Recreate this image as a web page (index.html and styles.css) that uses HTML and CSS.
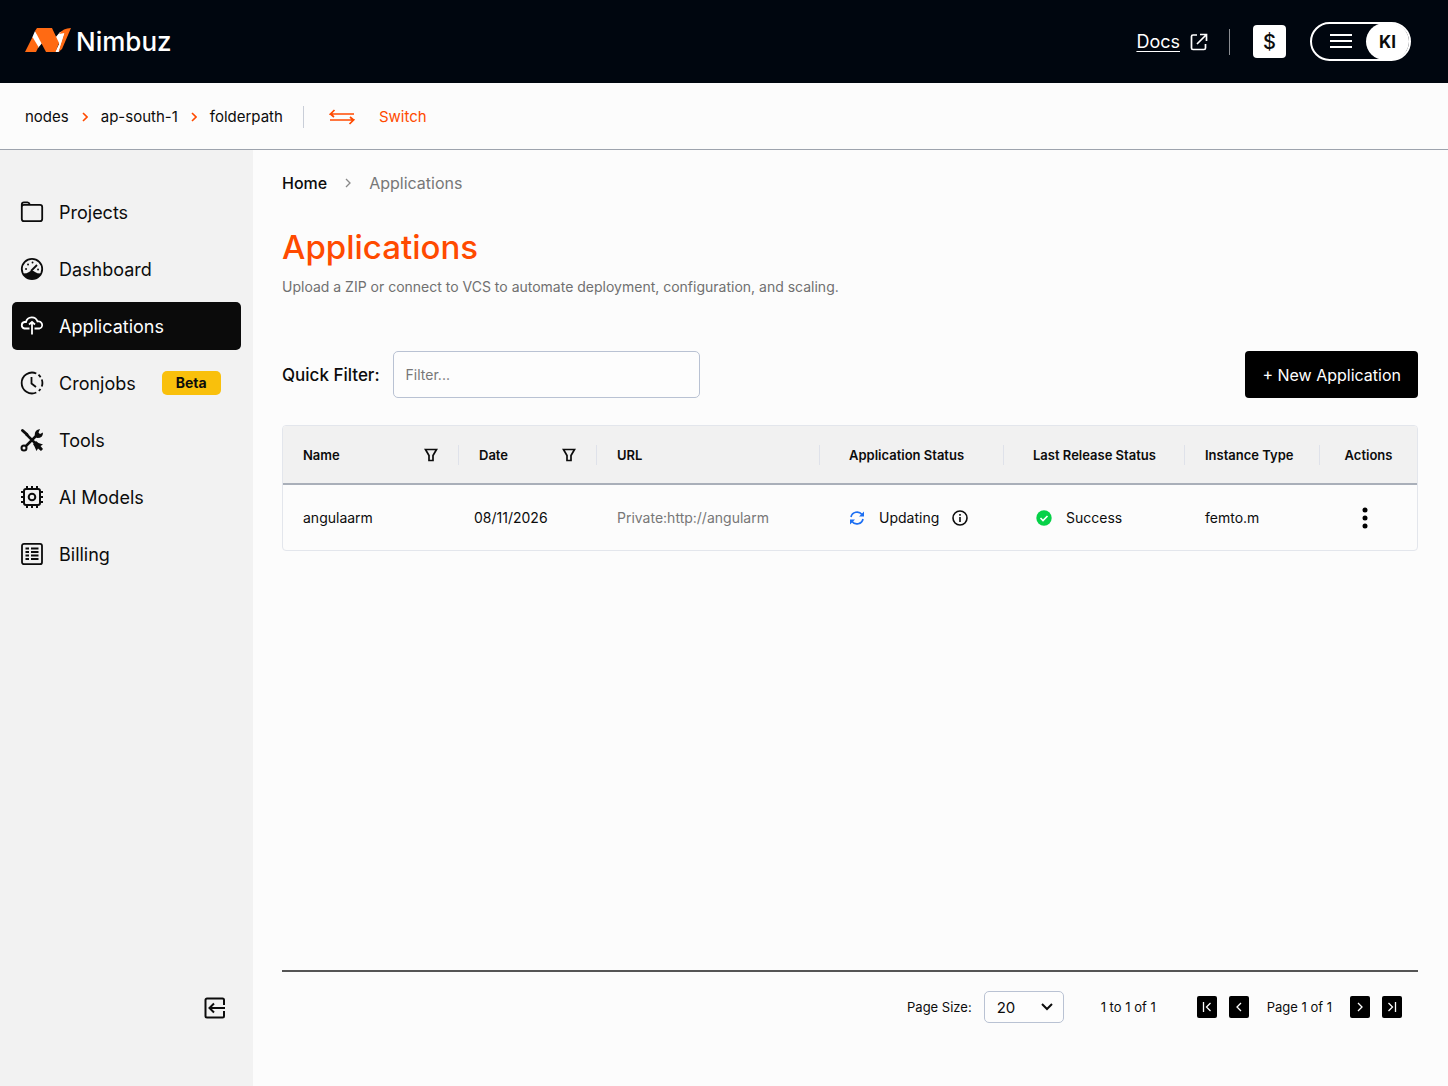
FILE: index.html
```html
<!DOCTYPE html>
<html lang="en">
<head>
<meta charset="utf-8">
<meta name="viewport" content="width=device-width, initial-scale=1">
<title>Nimbuz - Applications</title>
<link rel="stylesheet" href="styles.css">
</head>

<body>

<!-- top bar -->
<header class="topbar">
  <a href="#" class="logo">
    <svg width="46" height="28" viewBox="0 1 46 28" aria-hidden="true">
      <path fill="#fff" d="M10 4L7 11L13 21L18 15ZM30 11L35 5L40.500 4L34 25H30L34 17Z"/>
      <path fill="#ff6a13" d="M0 25L7.500 10L13.500 20L11 25Z"/>
      <path fill="#ff6a13" d="M12 1H27L34 16L30.500 25H21L10 4Z"/>
      <path fill="#ff6a13" d="M34 7Q38 1 46 1L37 22L33.500 25L39.500 6Z"/>
    </svg>
    <span>Nimbuz</span>
  </a>
  <div class="topbar-right">
    <a href="#" class="docs">
      <span class="docs-text">Docs</span>
      <svg width="18" height="18" viewBox="0 0 18 18" fill="none" stroke="#fff" stroke-width="1.7" aria-hidden="true">
        <path d="M7 2H3Q1.500 2 1.500 3.500V15Q1.500 16.500 3 16.500H14Q15.500 16.500 15.500 15V11M10 1.500H16.500V8M16 2L7 11"/>
      </svg>
    </a>
    <span class="topbar-line"></span>
    <button type="button" class="currency">$</button>
    <button type="button" class="account">
      <svg width="22" height="18" viewBox="0 0 22 18" stroke="#fff" stroke-width="2" aria-hidden="true">
        <path d="M0 2H22M0 8H22M0 14H22"/>
      </svg>
      <span class="avatar">KI</span>
    </button>
  </div>
</header>

<!-- node path -->
<nav class="pathbar" aria-label="Path">
  <a href="#">nodes</a>
  <svg class="path-arrow" width="6" height="10" viewBox="0 0 6 10" aria-hidden="true"><path d="M1 1L5 5L1 9"/></svg>
  <a href="#">ap-south-1</a>
  <svg class="path-arrow" width="6" height="10" viewBox="0 0 6 10" aria-hidden="true"><path d="M1 1L5 5L1 9"/></svg>
  <a href="#">folderpath</a>
  <button type="button" class="switch">
    <svg width="26" height="16" viewBox="0 0 26 16" fill="none" stroke="#ff4a00" stroke-width="1.7" aria-hidden="true">
      <path d="M25 5H1.500L5.500 1M1.500 5L5 8M1 11H24.500L20.500 15M24.500 11L21 8"/>
    </svg>
    <span>Switch</span>
  </button>
</nav>

<div class="page">

  <!-- side menu -->
  <aside class="sidebar">
    <nav class="menu" aria-label="Main">
      <a href="#" class="menu-item">
        <svg width="24" height="24" viewBox="0 0 24 24" fill="none" stroke="currentColor" stroke-width="1.8" aria-hidden="true">
          <path d="M1.800 7V4.500Q1.800 2.300 4 2.300H7.500Q9 2.300 10 4.800H20Q22.200 4.800 22.200 7V19Q22.200 21.200 20 21.200H4Q1.800 21.200 1.800 19ZM1.800 7Q1.800 4.800 4 4.800H10"/>
        </svg>
        <span>Projects</span>
      </a>
      <a href="#" class="menu-item">
        <svg width="24" height="24" viewBox="0 0 24 24" fill="none" stroke="currentColor" stroke-width="1.8" aria-hidden="true">
          <circle cx="12" cy="12" r="10.200"/>
          <path fill="currentColor" stroke="none" d="M3 16.500Q7 16.500 9 15Q12 12.500 15 15Q17 16.500 21 16.500Q18 22 12 22Q6 22 3 16.500Z"/>
          <path d="M11 14L17 8"/>
          <path stroke-linecap="round" d="M6 12H6.100M8 7.500H8.100M12.500 5.500H12.600M18 12.500H18.100"/>
        </svg>
        <span>Dashboard</span>
      </a>
      <a href="#" class="menu-item active" aria-current="page">
        <svg width="24" height="24" viewBox="0 0 24 24" fill="none" stroke="currentColor" stroke-width="1.8" aria-hidden="true">
          <path d="M9.500 14.500H4.500A3.300 3.300 0 0 1 4.500 8H6A6 6 0 0 1 17.500 7.500A3.500 3.500 0 0 1 19.500 14.500H14.500M12 20.500V8M9 10.500L12 8L15 10.500"/>
        </svg>
        <span>Applications</span>
      </a>
      <a href="#" class="menu-item">
        <svg width="24" height="24" viewBox="0 0 24 24" fill="none" stroke="currentColor" stroke-width="1.8" aria-hidden="true">
          <path d="M16.300 2.500A10.400 10.400 0 1 0 16.300 21.500M18.500 3.800A10.400 10.400 0 0 1 20.600 6.200M21.800 8.500A10.400 10.400 0 0 1 21.800 15.500M20.500 18A10.400 10.400 0 0 1 18.800 19.900M11.500 6V12.500L16 16"/>
        </svg>
        <span>Cronjobs</span>
        <span class="beta">Beta</span>
      </a>
      <a href="#" class="menu-item">
        <svg width="24" height="24" viewBox="0 0 24 24" fill="none" stroke="currentColor" stroke-width="2" aria-hidden="true">
          <path stroke-width="3" stroke-linecap="round" d="M2.500 2.500L7 6.500"/>
          <path stroke-width="2.500" d="M6 6L15 15M6 18L17 7"/>
          <circle cx="4" cy="20" r="2.500"/>
          <path fill="currentColor" stroke="none" d="M15 9Q14 4 17 2L20 1L18.500 4.500L20 6L23 4.500Q23 10 17.500 10ZM13 16L16 13L18.500 15L23 16.500L20.500 18L23 21L21 23L18 20.500L16.500 23L14.500 18.500Z"/>
        </svg>
        <span>Tools</span>
      </a>
      <a href="#" class="menu-item">
        <svg width="24" height="24" viewBox="0 0 24 24" fill="none" stroke="currentColor" stroke-width="2" aria-hidden="true">
          <rect x="4" y="4" width="16" height="16" rx="2"/><circle cx="12" cy="12" r="3.300"/>
          <path d="M7 4V1M12 4V1M17 4V1M7 23V20M12 23V20M17 23V20M4 7H1M4 12H1M4 17H1M23 7H20M23 12H20M23 17H20"/>
        </svg>
        <span>AI Models</span>
      </a>
      <a href="#" class="menu-item">
        <svg width="24" height="24" viewBox="0 0 24 24" fill="none" stroke="currentColor" stroke-width="1.8" aria-hidden="true">
          <rect x="2" y="1.800" width="20" height="20.400" rx="2"/>
          <path d="M5.500 6.500H9M5.500 10H9M5.500 13.500H9M5.500 17H9M11 6.500H18.500M11 10H18.500M11 13.500H18.500M11 17H18.500"/>
        </svg>
        <span>Billing</span>
      </a>
    </nav>
    <button type="button" class="collapse" aria-label="Collapse menu">
      <svg width="22" height="22" viewBox="0 0 22 22" fill="none" stroke="#0c0c0c" stroke-width="2" aria-hidden="true">
        <path d="M20 8V3A1.500 1.500 0 0 0 18.500 1.500H3A1.500 1.500 0 0 0 1.500 3V19A1.500 1.500 0 0 0 3 20.500H18.500A1.500 1.500 0 0 0 20 19V14M21 11H6M10 6.500L5.500 11L10 15.500"/>
      </svg>
    </button>
  </aside>

  <!-- content -->
  <main class="content">
    <nav class="crumbs" aria-label="Breadcrumb">
      <a href="#">Home</a>
      <svg width="6" height="10" viewBox="0 0 6 10" fill="none" stroke="#888" stroke-width="1.3" aria-hidden="true"><path d="M1 1L5 5L1 9"/></svg>
      <span class="crumb-current">Applications</span>
    </nav>

    <h1>Applications</h1>
    <p class="intro">Upload a ZIP or connect to VCS to automate deployment, configuration, and scaling.</p>

    <div class="toolbar">
      <label for="quick_filter">Quick Filter:</label>
      <input type="text" id="quick_filter" class="filter" placeholder="Filter...">
      <button type="button" class="new-app">+ New Application</button>
    </div>

    <div class="table-box">
      <table class="apps">
        <colgroup>
          <col class="col-name">
          <col class="col-date">
          <col class="col-url">
          <col class="col-status">
          <col class="col-release">
          <col class="col-type">
          <col class="col-actions">
        </colgroup>
        <thead>
          <tr>
            <th>
              <div class="head-cell"><span>Name</span>
                <button type="button" class="col-filter" aria-label="Filter name"><svg width="14" height="14" viewBox="0 0 14 14" aria-hidden="true"><path d="M1.500 1.500H12.500L9 7.500V12.500H5V7.500Z"/></svg></button>
              </div>
            </th>
            <th>
              <div class="head-cell"><span>Date</span>
                <button type="button" class="col-filter" aria-label="Filter date"><svg width="14" height="14" viewBox="0 0 14 14" aria-hidden="true"><path d="M1.500 1.500H12.500L9 7.500V12.500H5V7.500Z"/></svg></button>
              </div>
            </th>
            <th><div class="head-cell">URL</div></th>
            <th class="wide"><div class="head-cell">Application Status</div></th>
            <th class="wide"><div class="head-cell">Last Release Status</div></th>
            <th><div class="head-cell">Instance Type</div></th>
            <th><div class="head-cell">Actions</div></th>
          </tr>
        </thead>
        <tbody>
          <tr>
            <td>angulaarm</td>
            <td class="date">08/11/2026</td>
            <td class="url">Private:http://angularm</td>
            <td class="wide">
              <div class="status">
                <svg width="16" height="16" viewBox="0 0 16 16" fill="none" stroke="#1d6ff2" stroke-width="1.7" aria-hidden="true">
                  <path d="M2 7A6.200 6.200 0 0 1 13 4.500M14 9A6.200 6.200 0 0 1 3 11.500"/>
                  <path fill="#1d6ff2" stroke="none" d="M15 1.500V6.500H10ZM1 14.500V9.500H6Z"/>
                </svg>
                <span>Updating</span>
                <svg class="info" width="16" height="16" viewBox="0 0 16 16" fill="none" stroke="#0c0c0c" stroke-width="1.6" aria-hidden="true">
                  <circle cx="8" cy="8" r="7"/><path d="M8 7V12M8 4V5.700"/>
                </svg>
              </div>
            </td>
            <td class="release">
              <div class="status">
                <svg width="16" height="16" viewBox="0 0 16 16" aria-hidden="true">
                  <circle cx="8" cy="8" r="7.700" fill="#06d148"/><path fill="none" stroke="#fff" stroke-width="1.6" d="M4.500 8L7 10.500L11.500 6"/>
                </svg>
                <span>Success</span>
              </div>
            </td>
            <td>femto.m</td>
            <td class="center">
              <button type="button" class="more" aria-label="Actions">
                <svg width="6" height="22" viewBox="0 0 6 22" aria-hidden="true"><circle cx="3" cy="3" r="2.500"/><circle cx="3" cy="11" r="2.500"/><circle cx="3" cy="19" r="2.500"/></svg>
              </button>
            </td>
          </tr>
        </tbody>
      </table>
    </div>

    <!-- paging -->
    <footer class="paging">
      <label for="page_size">Page Size:</label>
      <div class="size-box">
        <select id="page_size">
          <option>20</option>
          <option>50</option>
          <option>100</option>
        </select>
        <svg width="12" height="8" viewBox="0 0 12 8" fill="none" stroke="#0c0c0c" stroke-width="2" aria-hidden="true"><path d="M1 1L6 6L11 1"/></svg>
      </div>
      <span class="range">1 to 1 of 1</span>
      <div class="pager">
        <button type="button" aria-label="First page"><svg width="10" height="10" viewBox="0 0 10 10" aria-hidden="true"><path d="M1.500 0V10M8.500 1L4.500 5L8.500 9"/></svg></button>
        <button type="button" aria-label="Previous page"><svg width="10" height="10" viewBox="0 0 10 10" aria-hidden="true"><path d="M7 1L3 5L7 9"/></svg></button>
        <span class="page-no">Page 1 of 1</span>
        <button type="button" aria-label="Next page"><svg width="10" height="10" viewBox="0 0 10 10" aria-hidden="true"><path d="M3 1L7 5L3 9"/></svg></button>
        <button type="button" aria-label="Last page"><svg width="10" height="10" viewBox="0 0 10 10" aria-hidden="true"><path d="M8.500 0V10M1.500 1L5.500 5L1.500 9"/></svg></button>
      </div>
    </footer>
  </main>
</div>

</body>
</html>
```

FILE: styles.css
```css
* {box-sizing: border-box}

body {
  margin: 0;
  min-height: 100vh;
  display: flex;
  flex-direction: column;
  background-color: #fcfcfc;
  color: #0c0c0c;
  font-family: "Inter", sans-serif;
  font-size: 14px;
}

a {
  color: inherit;
  text-decoration: none;
}

button, input, select {
  font: inherit;
  color: inherit;
}

button {
  padding: 0;
  border: none;
  background: none;
  cursor: pointer;
}

svg {
  display: block;
  flex: none;
}

/* Top bar */
.topbar {
  display: flex;
  align-items: center;
  justify-content: space-between;
  height: 83px;
  padding: 0 37px 0 25px;
  background-color: #00060f;
  color: #fff;
}

.logo {
  display: flex;
  align-items: center;
  gap: 5px;
  font-size: 26px;
  font-weight: 500;
}

.topbar-right {
  display: flex;
  align-items: center;
}

.docs {
  display: flex;
  align-items: center;
  gap: 10px;
  font-size: 18px;
}

.docs-text {
  text-decoration: underline;
  text-underline-offset: 3px;
}

.topbar-line {
  width: 1px;
  height: 26px;
  margin: 0 23px 0 21px;
  background-color: #8a8d92;
}

.currency {
  width: 33px;
  height: 33px;
  margin-right: 24px;
  border-radius: 4px;
  background-color: #fff;
  color: #0c0c0c;
  font-size: 20px;
  font-weight: 500;
}

.account {
  display: flex;
  align-items: center;
  justify-content: flex-end;
  gap: 14px;
  width: 101px;
  height: 39px;
  border: 2px solid #fff;
  border-radius: 20px;
}

.avatar {
  display: flex;
  align-items: center;
  justify-content: center;
  width: 43px;
  height: 37px;
  border-radius: 20px;
  background-color: #fff;
  color: #0c0c0c;
  font-size: 17px;
  font-weight: 700;
}

/* Path bar */
.pathbar {
  display: flex;
  align-items: center;
  gap: 13px;
  height: 67px;
  padding: 1px 25px 0;
  border-bottom: 1px solid #9da3ad;
  font-size: 15px;
}

.path-arrow {
  fill: none;
  stroke: #ff4a00;
  stroke-width: 1.6;
}

.switch {
  display: flex;
  align-items: center;
  gap: 24px;
  height: 22px;
  margin-left: 7px;
  padding-left: 25px;
  border-left: 1px solid #c9ced8;
  color: #ff4a00;
}

/* Side menu */
.page {
  display: flex;
  flex: 1;
}

.sidebar {
  display: flex;
  flex-direction: column;
  justify-content: space-between;
  flex: none;
  width: 253px;
  padding: 38px 12px 67px;
  background-color: #f2f2f2;
}

.menu {
  display: flex;
  flex-direction: column;
  gap: 9px;
}

.menu-item {
  display: flex;
  align-items: center;
  gap: 15px;
  height: 48px;
  padding: 0 8px;
  border-radius: 5px;
  font-size: 18px;
}

.menu-item.active {
  background-color: #0b0b0b;
  color: #fff;
}

.beta {
  margin-left: 11px;
  padding: 0 14px;
  border-radius: 5px;
  background-color: #f9c00c;
  color: #0c0c0c;
  font-size: 14px;
  font-weight: 700;
  line-height: 24px;
}

.collapse {
  align-self: flex-end;
  margin-right: 15px;
}

/* Content */
.content {
  display: flex;
  flex-direction: column;
  flex: 1;
  min-width: 0;
  padding: 22px 30px 63px 29px;
}

.crumbs {
  display: flex;
  align-items: center;
  gap: 18px;
  font-size: 16px;
  font-weight: 500;
  line-height: 22px;
}

.crumb-current {
  color: #777;
  font-weight: 400;
}

h1 {
  margin: 30px 0 0;
  color: #ff4a00;
  font-size: 33px;
  font-weight: 500;
  line-height: 46px;
}

.intro {
  margin: 7px 0 0;
  color: #707070;
  font-size: 14px;
  line-height: 20px;
}

.toolbar {
  display: flex;
  align-items: center;
  margin: 54px 0 27px;
}

.toolbar label {
  font-size: 17px;
  font-weight: 500;
}

.filter {
  width: 307px;
  height: 47px;
  margin-left: 13px;
  padding: 0 12px;
  border: 1px solid #b9c2d3;
  border-radius: 5px;
  background-color: #fdfdfd;
}

.filter::placeholder {
  color: #777;
}

.new-app {
  height: 47px;
  margin-left: auto;
  padding: 0 17px;
  border-radius: 4px;
  background-color: #000;
  color: #fff;
  font-size: 16px;
}

/* Table */
.table-box {
  flex: 1;
}

.apps {
  width: 100%;
  table-layout: fixed;
  border: 1px solid #e3e6ec;
  border-radius: 4px;
  border-spacing: 0;
  overflow: hidden;
}

.col-name {width: 176px}
.col-date {width: 138px}
.col-url {width: 223px}
.col-status {width: 184px}
.col-release {width: 181px}
.col-type {width: 135px}
.col-actions {width: 97px}

.apps th {
  height: 59px;
  padding: 0;
  border-bottom: 2px solid #a9afb9;
  background-color: #f1f1f1;
  font-size: 13px;
  font-weight: 600;
  text-align: left;
  white-space: nowrap;
}

.head-cell {
  display: flex;
  align-items: center;
  justify-content: space-between;
  height: 20px;
  padding: 0 20px;
  border-right: 1px solid #dfe2ea;
}

th:last-child .head-cell {
  justify-content: center;
  border-right: none;
}

.wide .head-cell {
  padding: 0 0 0 29px;
}

.col-filter svg {
  fill: none;
  stroke: #0c0c0c;
  stroke-width: 1.7;
}

.apps td {
  height: 65px;
  padding: 0 20px;
  white-space: nowrap;
}

.apps td.date {
  padding: 0 15px;
}

.apps td.wide {
  padding: 0 0 0 29px;
}

.apps td.release {
  padding: 0 0 0 32px;
}

.apps td.center {
  padding: 0 8px 0 0;
  text-align: center;
}

.apps td.url {
  color: #777;
}

.status {
  display: flex;
  align-items: center;
  gap: 14px;
}

.info {
  margin-left: -1px;
}

.more {
  padding: 4px 8px;
}

/* Paging */
.paging {
  display: flex;
  align-items: center;
  justify-content: flex-end;
  padding: 19px 16px 0 0;
  border-top: 2px solid #555;
  font-size: 13px;
}

.size-box {
  display: grid;
  align-items: center;
  margin: 0 37px 0 12px;
}

.size-box select, .size-box svg {
  grid-area: 1 / 1;
}

.size-box select {
  width: 80px;
  height: 32px;
  padding: 0 12px;
  border: 1px solid #b9c2d3;
  border-radius: 5px;
  background-color: #fdfdfd;
  font-size: 15px;
  appearance: none;
}

.size-box svg {
  justify-self: end;
  margin-right: 11px;
  pointer-events: none;
}

.pager {
  display: flex;
  align-items: center;
  gap: 12px;
  margin-left: 41px;
}

.pager button {
  display: flex;
  align-items: center;
  justify-content: center;
  width: 20px;
  height: 22px;
  border-radius: 2px;
  background-color: #000;
}

.pager button svg {
  fill: none;
  stroke: #fff;
  stroke-width: 1.3;
}

.page-no {
  margin: 0 6px;
}
```
